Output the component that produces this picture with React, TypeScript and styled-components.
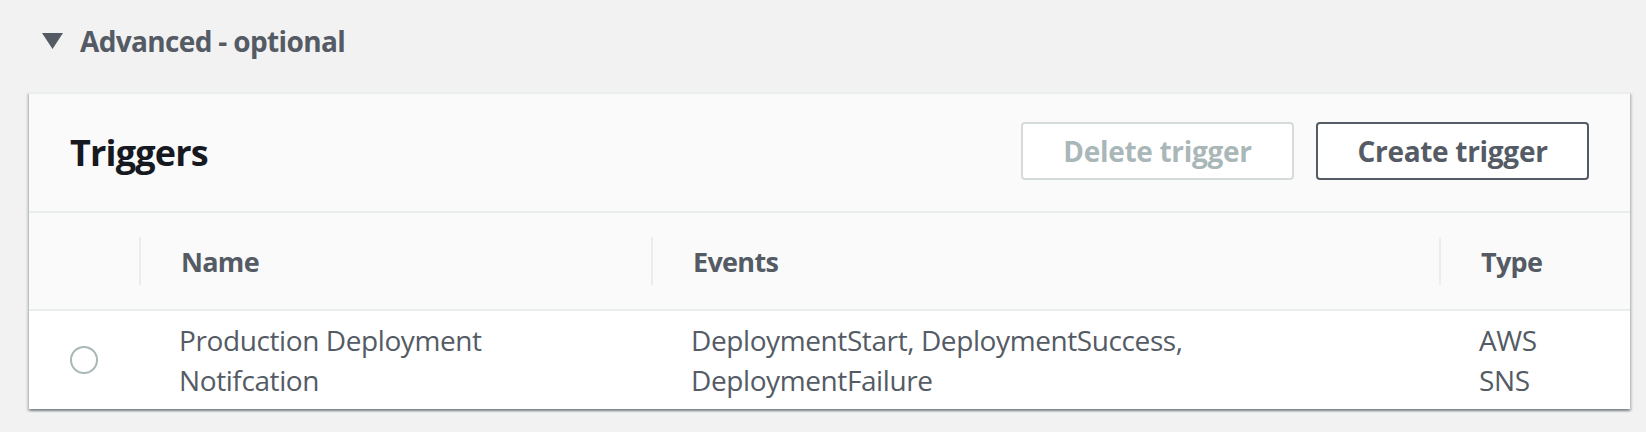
import React from "react";
import styled, { createGlobalStyle } from "styled-components";

const GlobalStyle = createGlobalStyle`
  html, body {
    margin: 0;
    padding: 0;
    background: #f2f2f2;
  }
  body {
    font-family: "Open Sans", "Liberation Sans", Arial, sans-serif;
    color: #545b64;
  }
  * { box-sizing: border-box; }
`;

const Page = styled.div`
  width: 1646px;
  height: 432px;
  padding: 0 16px 0 29px;
  background: #f2f2f2;
`;

const SectionHeader = styled.div`
  height: 82px;
  display: flex;
  align-items: center;
  gap: 17px;
  padding-left: 13px;
  margin-bottom: 10px;
`;

const SectionTitle = styled.span`
  font-size: 28px;
  font-weight: 700;
  letter-spacing: -0.65px;
  color: #545b64;
`;

const Card = styled.div`
  background: #ffffff;
  border-top: 2px solid #eaeded;
  box-shadow: 0 2px 2px 0 rgba(0, 28, 36, 0.3),
    2px 2px 2px 0 rgba(0, 28, 36, 0.15),
    -2px 2px 2px 0 rgba(0, 28, 36, 0.15);
`;

const CardHeader = styled.div`
  height: 119px;
  display: flex;
  align-items: center;
  justify-content: space-between;
  padding: 0 41px;
  background: #fafafa;
  border-bottom: 2px solid #eaeded;
`;

const Title = styled.h2`
  margin: 0;
  font-size: 36px;
  font-weight: 700;
  letter-spacing: -0.8px;
  color: #16191f;
`;

const Actions = styled.div`
  display: flex;
  gap: 22px;
  margin-bottom: 4px;
`;

const Button = styled.button<{ $disabled?: boolean }>`
  width: 273px;
  height: 58px;
  border-radius: 4px;
  background: #ffffff;
  font-family: inherit;
  font-size: 28px;
  font-weight: 700;
  letter-spacing: -0.3px;
  padding: 0;
  cursor: ${(p) => (p.$disabled ? "default" : "pointer")};
  border: 2px solid ${(p) => (p.$disabled ? "#d5dbdb" : "#545b64")};
  color: ${(p) => (p.$disabled ? "#aab7b8" : "#545b64")};
`;

const Grid = styled.div`
  display: grid;
  grid-template-columns: 110px 512px 788px 1fr;
`;

const HeadCell = styled.div`
  height: 98px;
  display: flex;
  align-items: center;
  background: #fafafa;
  border-bottom: 2px solid #eaeded;
`;

const Divider = styled.span`
  width: 2px;
  height: 48px;
  background: #eaeded;
  flex-shrink: 0;
`;

const HeadLabel = styled.span`
  padding-left: 40px;
  font-size: 27px;
  font-weight: 700;
  letter-spacing: -0.7px;
  color: #545b64;
`;

const BodyCell = styled.div<{ $center?: boolean }>`
  height: 98px;
  display: flex;
  align-items: center;
  justify-content: ${(p) => (p.$center ? "center" : "flex-start")};
  padding: ${(p) => (p.$center ? "0" : "0 40px")};
  font-size: 28px;
  line-height: 40px;
  letter-spacing: -0.4px;
  color: #545b64;
  background: #ffffff;
`;

const Radio = styled.span`
  width: 28px;
  height: 28px;
  border-radius: 50%;
  border: 2px solid #aab7b8;
  background: #ffffff;
  display: inline-block;
`;

const Caret = () => (
  <svg width="21" height="16" viewBox="0 0 21 16" aria-hidden="true">
    <polygon points="0,0 21,0 10.5,16" fill="#545b64" />
  </svg>
);

const columns = ["Name", "Events", "Type"];

export default function App() {
  return (
    <>
      <GlobalStyle />
      <Page>
        <SectionHeader>
          <Caret />
          <SectionTitle>Advanced - optional</SectionTitle>
        </SectionHeader>
        <Card>
          <CardHeader>
            <Title>Triggers</Title>
            <Actions>
              <Button $disabled>Delete trigger</Button>
              <Button>Create trigger</Button>
            </Actions>
          </CardHeader>
          <Grid>
            <HeadCell />
            {columns.map((c) => (
              <HeadCell key={c}>
                <Divider />
                <HeadLabel>{c}</HeadLabel>
              </HeadCell>
            ))}
            <BodyCell $center>
              <Radio />
            </BodyCell>
            <BodyCell>Production Deployment Notifcation</BodyCell>
            <BodyCell>DeploymentStart, DeploymentSuccess, DeploymentFailure</BodyCell>
            <BodyCell>AWS SNS</BodyCell>
          </Grid>
        </Card>
      </Page>
    </>
  );
}
